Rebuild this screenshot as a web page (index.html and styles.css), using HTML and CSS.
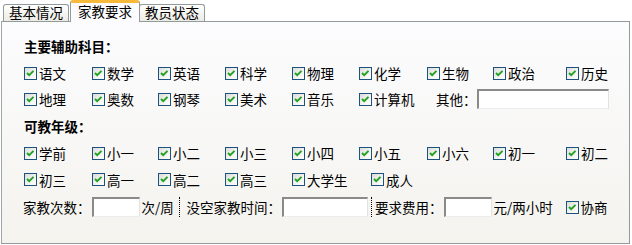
FILE: index.html
```html
<!DOCTYPE html>
<html lang="zh-CN">
<head>
<meta charset="utf-8">
<title>家教要求</title>
<link rel="stylesheet" href="styles.css">
</head>
<body>
<div class="tabs">
  <div class="tab">基本情况</div>
  <div class="tab active">家教要求</div>
  <div class="tab last">教员状态</div>
</div>
<div class="panel">
  <div class="heading">主要辅助科目：</div>
  <div class="row grid9">
    <label class="item"><span class="cb"><svg viewBox="0 0 11 11"><polyline points="2,5 4.2,7.2 8.5,2.8"/></svg></span>语文</label>
    <label class="item"><span class="cb"><svg viewBox="0 0 11 11"><polyline points="2,5 4.2,7.2 8.5,2.8"/></svg></span>数学</label>
    <label class="item"><span class="cb"><svg viewBox="0 0 11 11"><polyline points="2,5 4.2,7.2 8.5,2.8"/></svg></span>英语</label>
    <label class="item"><span class="cb"><svg viewBox="0 0 11 11"><polyline points="2,5 4.2,7.2 8.5,2.8"/></svg></span>科学</label>
    <label class="item"><span class="cb"><svg viewBox="0 0 11 11"><polyline points="2,5 4.2,7.2 8.5,2.8"/></svg></span>物理</label>
    <label class="item"><span class="cb"><svg viewBox="0 0 11 11"><polyline points="2,5 4.2,7.2 8.5,2.8"/></svg></span>化学</label>
    <label class="item"><span class="cb"><svg viewBox="0 0 11 11"><polyline points="2,5 4.2,7.2 8.5,2.8"/></svg></span>生物</label>
    <label class="item"><span class="cb"><svg viewBox="0 0 11 11"><polyline points="2,5 4.2,7.2 8.5,2.8"/></svg></span>政治</label>
    <label class="item"><span class="cb"><svg viewBox="0 0 11 11"><polyline points="2,5 4.2,7.2 8.5,2.8"/></svg></span>历史</label>
  </div>
  <div class="row grid9">
    <label class="item"><span class="cb"><svg viewBox="0 0 11 11"><polyline points="2,5 4.2,7.2 8.5,2.8"/></svg></span>地理</label>
    <label class="item"><span class="cb"><svg viewBox="0 0 11 11"><polyline points="2,5 4.2,7.2 8.5,2.8"/></svg></span>奥数</label>
    <label class="item"><span class="cb"><svg viewBox="0 0 11 11"><polyline points="2,5 4.2,7.2 8.5,2.8"/></svg></span>钢琴</label>
    <label class="item"><span class="cb"><svg viewBox="0 0 11 11"><polyline points="2,5 4.2,7.2 8.5,2.8"/></svg></span>美术</label>
    <label class="item"><span class="cb"><svg viewBox="0 0 11 11"><polyline points="2,5 4.2,7.2 8.5,2.8"/></svg></span>音乐</label>
    <label class="item"><span class="cb"><svg viewBox="0 0 11 11"><polyline points="2,5 4.2,7.2 8.5,2.8"/></svg></span>计算机</label>
    <div class="other"><span>其他：</span><span class="input wide"></span></div>
  </div>
  <div class="heading heading2">可教年级：</div>
  <div class="row grid9">
    <label class="item"><span class="cb"><svg viewBox="0 0 11 11"><polyline points="2,5 4.2,7.2 8.5,2.8"/></svg></span>学前</label>
    <label class="item"><span class="cb"><svg viewBox="0 0 11 11"><polyline points="2,5 4.2,7.2 8.5,2.8"/></svg></span>小一</label>
    <label class="item"><span class="cb"><svg viewBox="0 0 11 11"><polyline points="2,5 4.2,7.2 8.5,2.8"/></svg></span>小二</label>
    <label class="item"><span class="cb"><svg viewBox="0 0 11 11"><polyline points="2,5 4.2,7.2 8.5,2.8"/></svg></span>小三</label>
    <label class="item"><span class="cb"><svg viewBox="0 0 11 11"><polyline points="2,5 4.2,7.2 8.5,2.8"/></svg></span>小四</label>
    <label class="item"><span class="cb"><svg viewBox="0 0 11 11"><polyline points="2,5 4.2,7.2 8.5,2.8"/></svg></span>小五</label>
    <label class="item"><span class="cb"><svg viewBox="0 0 11 11"><polyline points="2,5 4.2,7.2 8.5,2.8"/></svg></span>小六</label>
    <label class="item"><span class="cb"><svg viewBox="0 0 11 11"><polyline points="2,5 4.2,7.2 8.5,2.8"/></svg></span>初一</label>
    <label class="item"><span class="cb"><svg viewBox="0 0 11 11"><polyline points="2,5 4.2,7.2 8.5,2.8"/></svg></span>初二</label>
  </div>
  <div class="row grid6 tall">
    <label class="item"><span class="cb"><svg viewBox="0 0 11 11"><polyline points="2,5 4.2,7.2 8.5,2.8"/></svg></span>初三</label>
    <label class="item"><span class="cb"><svg viewBox="0 0 11 11"><polyline points="2,5 4.2,7.2 8.5,2.8"/></svg></span>高一</label>
    <label class="item"><span class="cb"><svg viewBox="0 0 11 11"><polyline points="2,5 4.2,7.2 8.5,2.8"/></svg></span>高二</label>
    <label class="item"><span class="cb"><svg viewBox="0 0 11 11"><polyline points="2,5 4.2,7.2 8.5,2.8"/></svg></span>高三</label>
    <label class="item"><span class="cb"><svg viewBox="0 0 11 11"><polyline points="2,5 4.2,7.2 8.5,2.8"/></svg></span>大学生</label>
    <label class="item"><span class="cb"><svg viewBox="0 0 11 11"><polyline points="2,5 4.2,7.2 8.5,2.8"/></svg></span>成人</label>
  </div>
  <div class="row bottom">
    <span class="lbl">家教次数：</span>
    <span class="input small"></span>
    <span class="unit1">次/周</span>
    <span class="sep"></span>
    <span class="lbl lbl2">没空家教时间：</span>
    <span class="input mid"></span>
    <span class="sep sep2"></span>
    <span class="lbl lbl3">要求费用：</span>
    <span class="input small"></span>
    <span class="unit2">元/两小时</span>
    <label class="item"><span class="cb"><svg viewBox="0 0 11 11"><polyline points="2,5 4.2,7.2 8.5,2.8"/></svg></span>协商</label>
  </div>
</div>
</body>
</html>
```
FILE: styles.css
```css
html, body {
  margin: 0;
  padding: 0;
  background: #ffffff;
}
body {
  font-family: "Noto Sans CJK SC", "Liberation Sans", sans-serif;
  font-size: 13.5px;
  line-height: 16px;
  color: #000000;
}
.tabs {
  display: flex;
  align-items: flex-end;
  height: 21px;
  padding-left: 3px;
  position: relative;
  z-index: 1;
}
.tab {
  box-sizing: border-box;
  width: 66px;
  height: 17px;
  border: 1px solid #919b9c;
  border-bottom: none;
  border-radius: 3px 3px 0 0;
  background: linear-gradient(#ffffff, #ecebe4);
  text-align: center;
  line-height: 15px;
  white-space: nowrap;
}
.tab.active {
  width: 70px;
  height: 22px;
  margin-left: 1px;
  margin-bottom: -1px;
  border-top: 3px solid #f7b93a;
  background: #fcfcfe;
  line-height: 17px;
}
.tab.last {
  margin-left: -1px;
}
.panel {
  box-sizing: border-box;
  margin-left: 1px;
  width: 629px;
  height: 223px;
  border: 1px solid #919b9c;
  border-left-color: #a0a6a8;
  background: linear-gradient(#fcfcfe, #f4f3ee);
  padding: 11px 0 0 22px;
}
.heading {
  height: 27px;
  line-height: 27px;
  font-weight: bold;
}
.heading2 {
  height: 28px;
  line-height: 28px;
}
.row {
  height: 26px;
  align-items: center;
}
.row.tall {
  height: 27px;
}
.grid9 {
  display: grid;
  grid-template-columns: 68px 66px 67px 67px 67px 68px 66px 73px auto;
}
.grid6 {
  display: grid;
  grid-template-columns: 68px 66px 67px 67px 79px auto;
}
.item {
  display: flex;
  align-items: center;
  white-space: nowrap;
}
.cb {
  box-sizing: border-box;
  width: 13px;
  height: 13px;
  border: 1px solid #1c5180;
  background: linear-gradient(135deg, #dcdcd7 0%, #f4f4f2 60%, #ffffff 100%);
  margin-right: 2px;
  display: flex;
}
.cb svg {
  width: 11px;
  height: 11px;
}
.cb polyline {
  fill: none;
  stroke: #21a121;
  stroke-width: 1.9;
}
.other {
  grid-column: 7 / 10;
  display: flex;
  align-items: center;
  padding-left: 9px;
}
.input {
  box-sizing: border-box;
  display: block;
  height: 20px;
  background: #ffffff;
  border-style: solid;
  border-width: 2px 1px 1px 2px;
  border-color: #8a8a8a #e2e2e2 #ececec #8a8a8a;
}
.input.wide {
  width: 132px;
}
.input.small {
  width: 48px;
  margin-left: 1px;
}
.input.mid {
  width: 86px;
  margin-left: 1px;
}
.bottom {
  display: flex;
  margin-left: -1px;
  margin-top: 1px;
}
.unit1 {
  width: 39px;
  padding-left: 2px;
  box-sizing: border-box;
  white-space: nowrap;
}
.sep {
  display: block;
  height: 20px;
  border-left: 1px dotted #000000;
}
.lbl2 {
  padding-left: 7px;
}
.sep2 {
  margin-left: 3px;
}
.lbl3 {
  padding-left: 3px;
}
.unit2 {
  box-sizing: border-box;
  width: 74px;
  padding-left: 2px;
  white-space: nowrap;
}
```
